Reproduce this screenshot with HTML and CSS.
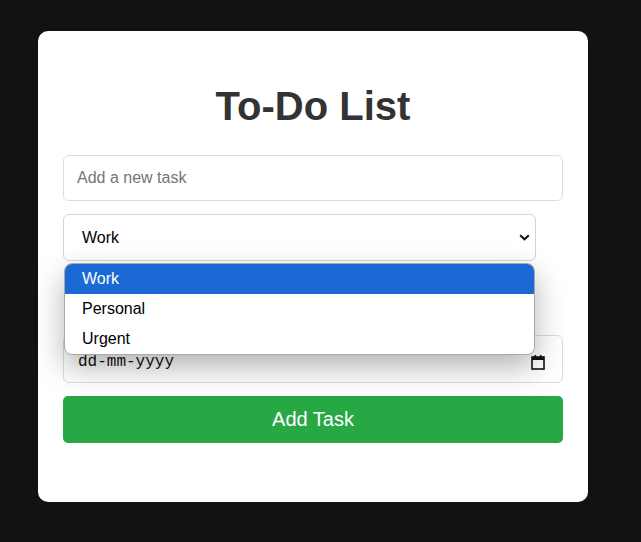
FILE: index.html
```html
<!DOCTYPE html>
<html lang="en">
<head>
<meta charset="utf-8">
<title>To-Do List</title>
<link rel="stylesheet" href="styles.css">
</head>
<body>
  <main class="card">
    <h1 class="title">To-Do List</h1>
    <div class="form">
      <input class="field text-field" type="text" placeholder="Add a new task">
      <div class="select-wrap">
        <div class="field select-field">
          <span>Work</span>
          <svg class="chevron" width="11" height="7" viewBox="0 0 11 7"><path d="M1.2 1.2 L5.5 5.3 L9.8 1.2" fill="none" stroke="#111" stroke-width="2"/></svg>
        </div>
        <ul class="popup">
          <li class="option selected">Work</li>
          <li class="option">Personal</li>
          <li class="option">Urgent</li>
        </ul>
      </div>
      <div class="spacer"></div>
      <div class="field date-field">
        <span class="date-text">dd-mm-yyyy</span>
        <svg class="cal" width="14" height="16" viewBox="0 0 14 16"><rect x="1" y="3" width="12" height="12" fill="none" stroke="#111" stroke-width="1.6"/><rect x="1" y="3" width="12" height="3" fill="#111"/><rect x="3.5" y="1" width="1.6" height="3" fill="#111"/><rect x="8.9" y="1" width="1.6" height="3" fill="#111"/></svg>
      </div>
      <button class="add-btn" type="button">Add Task</button>
    </div>
  </main>
</body>
</html>
```

FILE: styles.css
```css
html, body {
  margin: 0;
  padding: 0;
  background: #121212;
  font-family: "Liberation Sans", Arial, sans-serif;
}

body {
  padding: 31px 0 0 38px;
  height: 542px;
  box-sizing: border-box;
  overflow: hidden;
}

.card {
  width: 550px;
  box-sizing: border-box;
  background: #fff;
  border-radius: 10px;
  padding: 25px 25px 59px;
}

.title {
  margin: 27px 0 26px;
  font-size: 40px;
  line-height: 46px;
  font-weight: bold;
  color: #333;
  text-align: center;
}

.form {
  display: flex;
  flex-direction: column;
  gap: 13px;
}

.field {
  box-sizing: border-box;
  border: 1px solid #dcdcdc;
  border-radius: 6px;
  background: #fff;
  font-family: "Liberation Sans", Arial, sans-serif;
  font-size: 16px;
  color: #000;
}

.text-field {
  width: 500px;
  height: 46px;
  padding: 0 13px;
  outline: none;
  display: block;
  margin: 0;
}

.text-field::placeholder {
  color: #757575;
}

.select-wrap {
  position: relative;
  width: 473px;
}

.select-field {
  height: 47px;
  display: flex;
  align-items: center;
  justify-content: space-between;
  padding: 0 5px 0 18px;
  border-color: #d6d6d6;
}

.chevron {
  display: block;
}

.popup {
  position: absolute;
  top: 49px;
  left: 1px;
  width: 471px;
  margin: 0;
  padding: 0;
  list-style: none;
  background: #fff;
  border: 1px solid #a9a9a9;
  border-radius: 8px;
  overflow: hidden;
  box-sizing: border-box;
  box-shadow: 0 12px 30px rgba(0, 0, 0, 0.3);
  z-index: 5;
}

.option {
  height: 30px;
  line-height: 30px;
  padding-left: 17px;
  font-size: 16px;
  color: #000;
}

.option.selected {
  background: #1a69d4;
  color: #fff;
}

.spacer {
  height: 48px;
}

.date-field {
  width: 500px;
  height: 48px;
  display: flex;
  align-items: center;
  justify-content: space-between;
  padding: 6px 17px 0 14px;
}

.date-text {
  font-family: "Liberation Mono", "DejaVu Sans Mono", monospace;
  font-size: 16px;
  color: #111;
}

.cal {
  display: block;
}

.add-btn {
  width: 500px;
  height: 47px;
  border: none;
  border-radius: 5px;
  background: #28a745;
  color: #fff;
  font-family: "Liberation Sans", Arial, sans-serif;
  font-size: 20px;
  margin: 0;
  padding: 0;
  cursor: pointer;
}
```
